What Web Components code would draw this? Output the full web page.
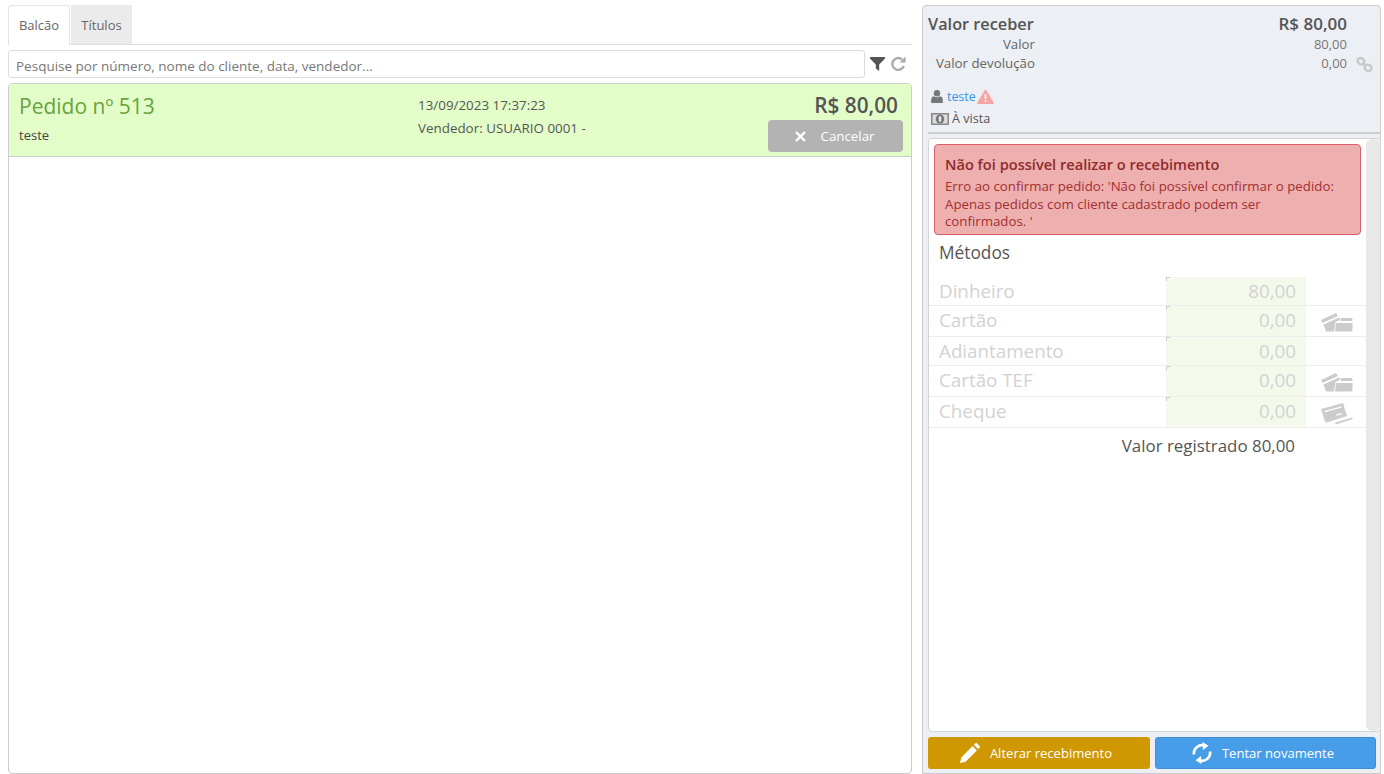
<!DOCTYPE html>
<html lang="pt"><head><meta charset="utf-8"><title>Recebimento</title>
<style>
html,body{margin:0;height:100%;background:#fff;overflow:hidden}
body{font-family:"Open Sans","Noto Sans",sans-serif;font-size:13px;color:#555}
</style></head><body>
<pos-app></pos-app>
<script>
const F='"Open Sans","Noto Sans",sans-serif';
function def(name,css,html){
  customElements.define(name,class extends HTMLElement{
    constructor(){super();const r=this.attachShadow({mode:'open'});r.innerHTML='<style>'+css+'</style>'+html;}
  });
}
const I={
 filter:'<svg width="15" height="14" viewBox="0 0 15 14"><path fill="#555" d="M0 0h15v1.400L9.200 7.400V14L5.800 11.400V7.400L0 1.400z"/></svg>',
 refresh:'<svg width="15" height="15" viewBox="0 0 15 15"><path fill="none" stroke="#aaa" stroke-width="2.400" d="M12.800 10A5.900 5.900 0 1 1 11 3.400"/><path fill="#aaa" d="M14.600 0.400v6.200H8.400z"/></svg>',
 times:'<svg width="11" height="11" viewBox="0 0 11 11"><path stroke="#fff" stroke-width="2.400" d="M1 1l9 9M10 1l-9 9"/></svg>',
 link:'<svg width="17" height="17" viewBox="0 0 17 17"><g fill="none" stroke="#c8c8c8" stroke-width="2.400"><ellipse cx="5" cy="5.200" rx="3.600" ry="3" transform="rotate(35 5 5.200)"/><ellipse cx="12" cy="11.800" rx="3.600" ry="3" transform="rotate(35 12 11.800)"/><path d="M6.500 6.800l4 3.400" stroke-width="1.800"/></g></svg>',
 user:'<svg width="12" height="13" viewBox="0 0 12 13"><circle cx="6" cy="3.300" r="3.200" fill="#777"/><path fill="#777" d="M0.200 13v-3.200C.2 7.600 1.700 6.500 3 6.300c.8.600 1.900 1 3 1s2.200-.4 3-1c1.300.2 2.800 1.300 2.800 3.500V13z"/></svg>',
 warn:'<svg width="17" height="14" viewBox="0 0 17 14"><path fill="#f6a5a5" d="M8.500 0c.5 0 .8.300 1 .6l7.200 12c.4.700 0 1.400-.8 1.400H1.100c-.8 0-1.200-.7-.8-1.400L7.500.6c.2-.3.5-.6 1-.6z"/><path fill="#fff" d="M7.600 4.200h1.800l-.2 5H7.800zM7.700 10.300h1.600v1.600H7.700z"/></svg>',
 money:'<svg width="18" height="12" viewBox="0 0 18 12"><rect width="18" height="12" fill="#888"/><rect x="1.500" y="1.500" width="15" height="9" fill="#dcdcdc"/><ellipse cx="9" cy="6" rx="4.200" ry="4.500" fill="#777"/><rect x="7.800" y="3.300" width="2.400" height="5.400" rx="1" fill="#eee"/></svg>',
 card:'<svg width="32" height="19" viewBox="0 0 32 19"><path fill="#ccc" d="M0 7L15 0l2 3L1.500 10zM2.500 11.500L18 4.500l1.500 2L14.500 9 13 18.500H5z"/><path fill="#ccc" d="M20 5h10c1 0 1.500.6 1.500 1.500V8H19.500zM15 10h16.500v7c0 1-.7 1.500-1.500 1.500H14z"/></svg>',
 cheque:'<svg width="32" height="22" viewBox="0 0 32 22"><path fill="#ccc" fill-rule="evenodd" d="M0 6L22 0l4 13-20 6.500c-1 .3-1.800-.1-2-1zM3.500 8l.4 1.300 17-4.700-.4-1.300zM15 12l1 1 2-1.500 1 1 2-1.500-.5-1-1.500 1-1-1z"/><path fill="#ccc" d="M14 19.500l17-5 1 1.500-17 5.500z"/></svg>',
 pencil:'<svg width="20" height="20" viewBox="0 0 20 20"><path fill="#fff" d="M0 20l1.300-5.600L12.600 3.100l4.300 4.300L5.600 18.700zM13.900 1.800l1.400-1.400c.5-.5 1.200-.5 1.700 0l2.600 2.600c.5.500.5 1.200 0 1.700l-1.400 1.400z"/></svg>',
 sync:'<svg width="20" height="22" viewBox="0 0 20 22"><g fill="none" stroke="#fff" stroke-width="2.600"><path d="M2 12.500A8 8 0 0 1 13 3.800"/><path d="M18 9.500A8 8 0 0 1 7 18.200"/></g><path fill="#fff" d="M10.500 0l6 3.700-5.500 4.300zM9.500 22l-6-3.700 5.500-4.300z"/></svg>'
};

def('pos-tabs',`:host{display:flex;height:39px;border-bottom:1px solid #ddd;gap:1px;box-sizing:content-box;font:13px ${F};color:#666}
.t{display:flex;align-items:center;box-sizing:border-box;height:39px}
.a{width:62px;justify-content:center;background:#fff;border:1px solid #e2e2e2;border-bottom:0;border-radius:4px 4px 0 0;height:40px;margin-bottom:-1px;padding-bottom:1px}
.b{width:61px;justify-content:center;background:#ebebeb;}`,
`<div class="t a">Balcão</div><div class="t b">Títulos</div>`);

def('pos-search',`:host{display:flex;align-items:center;height:28px;margin-top:5px;font:13.500px ${F}}
.i{flex:1;height:28px;box-sizing:border-box;border:1px solid #ddd;border-radius:3px;padding:2px 7px 0;line-height:26px;color:#777;background:#fff;white-space:nowrap}
.ic{display:flex;align-items:center;gap:6px;width:47px;padding:0 0 1px 5px;box-sizing:border-box}`,
`<div class="i">Pesquise por número, nome do cliente, data, vendedor...</div><div class="ic">${I.filter}${I.refresh}</div>`);

def('pos-order',`:host{display:grid;grid-template-columns:399px 1fr auto;height:72px;background:#e2fdc8;border-bottom:1px solid #ccc;box-sizing:content-box;padding:0 8px 0 10px;font:13.400px ${F};color:#555}
.n{font-size:21px;line-height:26px;color:#6aa33f;margin-top:9px;white-space:nowrap}
.c{margin-top:7px;font-size:13px;color:#444;line-height:18px}
.m{padding-top:10px;line-height:23px;color:#555;white-space:nowrap}
.r{display:flex;flex-direction:column;align-items:flex-end}
.p{font-size:20.800px;font-weight:600;line-height:26px;margin:8px 5px 0 0;color:#555;white-space:nowrap}
.btn{margin-top:2px;width:135px;height:32px;background:#b3b3b3;border-radius:4px;color:#fff;display:flex;align-items:center;justify-content:center;gap:15px;font-size:13.300px;padding-right:2px;box-sizing:border-box}`,
`<div><div class="n">Pedido nº 513</div><div class="c">teste</div></div>
<div class="m"><div>13/09/2023 17:37:23</div><div>Vendedor: USUARIO 0001 -</div></div>
<div class="r"><div class="p">R$ 80,00</div><div class="btn">${I.times}<span>Cancelar</span></div></div>`);

def('pos-left',`:host{display:flex;flex-direction:column;width:904px;height:769px;box-sizing:border-box}
.list{flex:1;margin-top:5px;border:1px solid #ccc;border-radius:4px;overflow:hidden;background:#fff}`,
`<pos-tabs></pos-tabs><pos-search></pos-search><div class="list"><pos-order></pos-order></div>`);

def('pos-summary',`:host{display:block;height:128px;box-sizing:border-box;border-bottom:2px solid #ccc;margin:0 0 0 5px;width:453px;font:13.300px ${F};color:#555;position:relative}
.top{display:flex;justify-content:space-between;padding-top:7px;line-height:22px;font-size:17px;font-weight:600;padding-right:34px}
.top span:first-child{font-size:16.300px}
.row{display:grid;grid-template-columns:107px 312px 1fr;line-height:19px;color:#666}
.row>:first-child{text-align:right}.row>:nth-child(2){text-align:right;color:#777;font-size:13px}
.row .z{padding-left:1px}
.row svg{display:block;margin:2px 0 0 9px}
.cl{display:flex;align-items:center;margin-top:14px;height:19px;padding-left:3px;font-size:12.400px}
.cl a{color:#2f97e8;margin:0 1px 0 4px}
.pay{display:flex;align-items:center;gap:3px;height:19px;margin-top:3px;padding-left:3px;font-size:12.600px}`,
`<div class="top"><span>Valor receber</span><span>R$ 80,00</span></div>
<div class="row"><span>Valor</span><span>80,00</span><span></span></div>
<div class="row"><span>Valor devolução</span><span class="z">0,00</span><span>${I.link}</span></div>
<div class="cl">${I.user}<a>teste</a>${I.warn}</div>
<div class="pay">${I.money}<span>À vista</span></div>`);

def('pos-alert',`:host{display:block;margin:5px 5px 0;width:427px;box-sizing:border-box;height:91px;background:#eeafaf;border:1px solid #d9606a;border-radius:4px;padding:9px 10px;color:#a33030;font:13.270px/17.500px ${F}}
h4{margin:0 0 4px;font-size:14.600px;font-weight:600;line-height:20px;color:#8f2b2b}p{margin:0;max-width:395px}`,
`<h4>Não foi possível realizar o recebimento</h4><p>Erro ao confirmar pedido: 'Não foi possível confirmar o pedido: Apenas pedidos com cliente cadastrado podem ser confirmados. '</p>`);

def('pos-method',`:host{display:grid;grid-template-columns:237px 140px 1fr;height:var(--h,30px);border-bottom:1px solid #eee;font:18.800px ${F};color:#d2d2d2;box-sizing:border-box}
.l{padding-left:10px;line-height:28px}
.v{background:#f3faec;text-align:right;padding-right:10px;line-height:28px;position:relative}
.v::before{content:"";position:absolute;left:0;top:0;width:3px;height:3px;border:solid #ccc;border-width:1px 0 0 1px}
.ic{display:flex;align-items:center;padding:3px 0 0 15px}`,
`<div class="l"><slot></slot></div><div class="v"><slot name="v"></slot></div><div class="ic"><slot name="i"></slot></div>`);

def('pos-body',`:host{display:flex;flex:1;min-height:0;margin:4px 0 0 5px;width:453px;border:1px solid #d4d4d4;border-radius:4px;background:#fff;overflow:hidden;box-sizing:border-box;font:13px ${F}}
.m{flex:1;min-width:0}
.bar{width:14px;background:#e8e8e8;border-radius:6px}
h3{margin:0;font-weight:400;font-size:17.300px;line-height:24px;color:#555;padding:6px 0 0 10px;height:42px;box-sizing:border-box}
.tot{font-size:16.900px;color:#555;text-align:right;padding-right:71px;line-height:24px;margin-top:6px}
svg{display:block}`,
`<div class="m"><pos-alert></pos-alert><h3>Métodos</h3>
<pos-method style="--h:29px">Dinheiro<span slot="v">80,00</span></pos-method>
<pos-method style="--h:31px">Cartão<span slot="v">0,00</span><span slot="i">${I.card}</span></pos-method>
<pos-method style="--h:29px">Adiantamento<span slot="v">0,00</span></pos-method>
<pos-method style="--h:31px">Cartão TEF<span slot="v">0,00</span><span slot="i">${I.card}</span></pos-method>
<pos-method style="--h:31px">Cheque<span slot="v">0,00</span><span slot="i">${I.cheque}</span></pos-method>
<div class="tot">Valor registrado 80,00</div></div><div class="bar"></div>`);

def('pos-actions',`:host{display:flex;gap:5px;margin:5px 0 4px 5px;height:32px;font:13.050px ${F};color:#fff}
.b{display:flex;align-items:center;justify-content:center;gap:10px;height:32px;border-radius:3px;box-sizing:border-box}
.y{width:222px;background:#cf9700;padding-right:6px}.u{width:221px;background:#489de9;border:1px solid #3f8fd8;padding-right:5px}`,
`<div class="b y">${I.pencil}<span>Alterar recebimento</span></div><div class="b u">${I.sync}<span>Tentar novamente</span></div>`);

def('pos-right',`:host{display:flex;flex-direction:column;width:459px;height:769px;box-sizing:border-box;background:#eceff3;border:1px solid #ccc;border-radius:4px 4px 0 0}`,
`<pos-summary></pos-summary><pos-body></pos-body><pos-actions></pos-actions>`);

def('pos-app',`:host{display:flex;gap:10px;padding:5px 3px 0 8px;box-sizing:border-box;width:1384px;height:774px}`,
`<pos-left></pos-left><pos-right></pos-right>`);
</script>
</body></html>
